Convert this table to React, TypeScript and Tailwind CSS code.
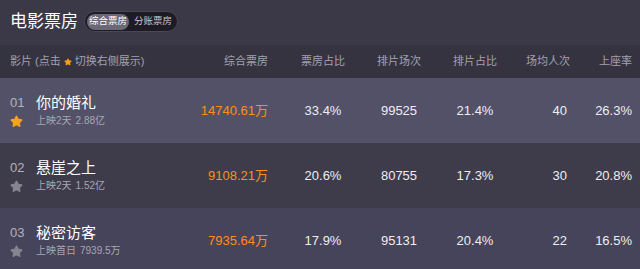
import { Star } from "lucide-react";

const movies = [
  { no: "01", name: "你的婚礼", info: "上映2天", total: "2.88亿", box: "14740.61万", boxRate: "33.4%", shows: "99525", showRate: "21.4%", avg: "40", seat: "26.3%", active: true, bg: "bg-[#535168]" },
  { no: "02", name: "悬崖之上", info: "上映2天", total: "1.52亿", box: "9108.21万", boxRate: "20.6%", shows: "80755", showRate: "17.3%", avg: "30", seat: "20.8%", active: false, bg: "bg-[#3e3c4b]" },
  { no: "03", name: "秘密访客", info: "上映首日", total: "7939.5万", box: "7935.64万", boxRate: "17.9%", shows: "95131", showRate: "20.4%", avg: "22", seat: "16.5%", active: false, bg: "bg-[#46445a]" },
];

const cols = "grid grid-cols-[190px_68px_93px_76px_76px_57px_62px] pl-[10px] items-center";

export default function App() {
  return (
    <div className="w-[640px] h-[269px] overflow-hidden bg-[#3b3947] font-['Liberation_Sans','Noto_Sans_CJK_SC',sans-serif]">
      {/* title */}
      <div className="h-[45px] flex items-center pl-[10px] gap-[6px] pb-[2px]">
        <h1 className="text-[17px] text-white leading-none">电影票房</h1>
        <div className="flex items-center h-[21px] rounded-full bg-[#1d1b24] border border-[#4a4856] px-[2px]">
          <span className="h-[16px] px-[2px] flex items-center rounded-full bg-[#6b6978] text-white text-[9.5px]">综合票房</span>
          <span className="pl-[5px] pr-[3px] text-[#c9c7d2] text-[9.5px]">分账票房</span>
        </div>
      </div>

      {/* header */}
      <div className={`${cols} h-[33px] bg-[#353340] text-[11px] text-[#a3a1ae]`}>
        <div className="flex items-center">
          影片 (点击<Star size={8} className="mx-[3px] fill-[#f5a01e] text-[#f5a01e]" />切换右侧展示)
        </div>
        <div className="text-right">综合票房</div>
        <div className="text-center pl-[17px]">票房占比</div>
        <div className="text-center">排片场次</div>
        <div className="text-center">排片占比</div>
        <div className="text-right">场均人次</div>
        <div className="text-right">上座率</div>
      </div>

      {/* rows */}
      {movies.map((m) => (
        <div key={m.no} className={`${cols} h-[65px] ${m.bg} text-[13px] text-[#eeedf3]`}>
          <div className="flex items-start">
            <div className="w-[26px] flex flex-col text-[#b3b1bd]">
              <span className="text-[13px] leading-[16px] pt-[1px]">{m.no}</span>
              <Star
                size={13}
                className={`mt-[4px] ${m.active ? "fill-[#f7a21b] text-[#f7a21b]" : "fill-[#86848f] text-[#86848f]"}`}
              />
            </div>
            <div className="flex flex-col">
              <span className="text-[15px] leading-[18px] text-white">{m.name}</span>
              <span className="text-[10px] leading-[14px] mt-[2px] text-[#a8a6b3]">
                {m.info}
                <span className="ml-[4px]">{m.total}</span>
              </span>
            </div>
          </div>
          <div className="text-right text-[#ff8c1c]">{m.box}</div>
          <div className="text-center pl-[17px]">{m.boxRate}</div>
          <div className="text-center">{m.shows}</div>
          <div className="text-center">{m.showRate}</div>
          <div className="text-right pr-[3px]">{m.avg}</div>
          <div className="text-right">{m.seat}</div>
        </div>
      ))}
    </div>
  );
}
